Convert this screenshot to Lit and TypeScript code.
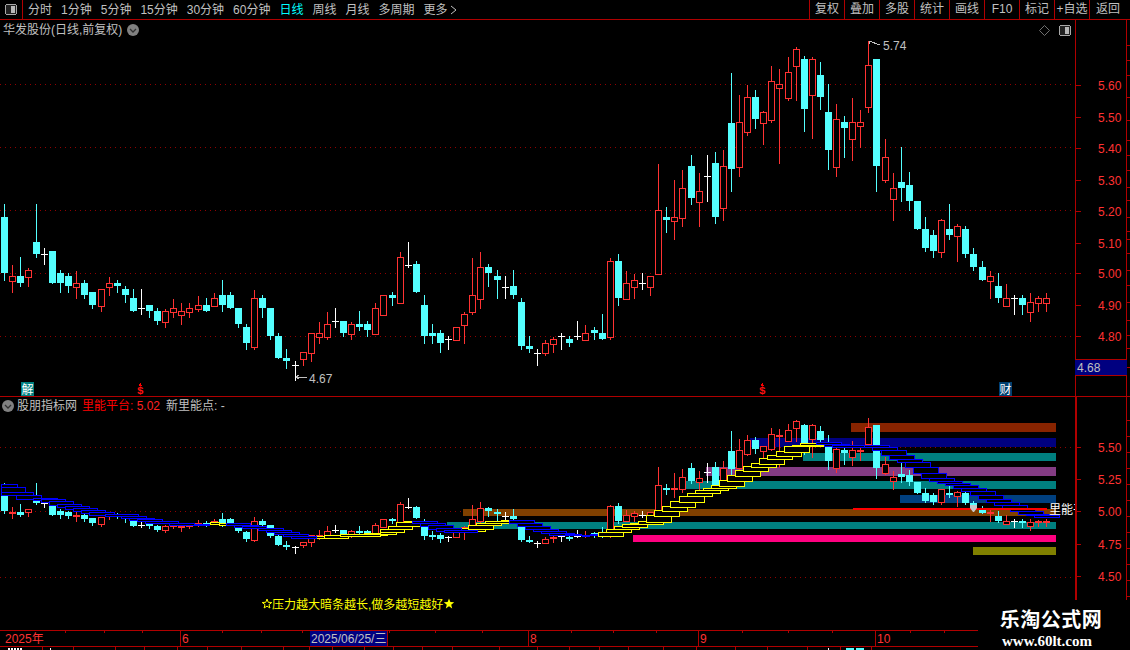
import { LitElement, html, css, svg } from "lit";
import { customElement } from "lit/decorators.js";

type C = { x: number; k: string; h: number; t: number; b: number; l: number };

const grp = (x0: number, y0: number, rows: (number | string)[][]): C[] =>
  rows.map(([z, k, h, t, b, l]) => ({
    x: Math.floor(x0 + (z as number) / 3),
    k: k as string,
    h: y0 + (h as number) / 3,
    t: y0 + (t as number) / 3,
    b: y0 + (b as number) / 3,
    l: y0 + (l as number) / 3,
  }));

const candles: C[] = [
  ...grp(0, 190, [
    [13, "c", 42, 81, 249, 270], [37, "r", 225, 259, 272, 306], [61, "c", 201, 258, 279, 288],
    [85, "r", 234, 240, 261, 288], [109, "c", 42, 156, 192, 201], [133, "w", 174, 192, 192, 222],
    [157, "c", 183, 183, 279, 279], [181, "c", 240, 249, 279, 306], [205, "c", 249, 258, 288, 306],
    [229, "r", 243, 279, 291, 324], [253, "c", 270, 279, 315, 324], [277, "c", 306, 306, 345, 354],
    [304, "r", 297, 297, 348, 363], [328, "r", 261, 279, 291, 315], [352, "c", 270, 279, 288, 306],
    [376, "c", 288, 297, 315, 336], [400, "c", 297, 324, 363, 363], [424, "w", 297, 354, 354, 372],
    [448, "c", 345, 345, 363, 381], [472, "c", 354, 363, 393, 402], [496, "r", 357, 363, 396, 411],
    [520, "r", 327, 354, 366, 381], [544, "r", 339, 363, 375, 402], [568, "r", 339, 354, 366, 381],
    [595, "r", 318, 345, 357, 363], [619, "c", 324, 345, 363, 363], [643, "r", 309, 324, 348, 348],
    [667, "c", 270, 315, 345, 363], [691, "c", 306, 315, 354, 354], [715, "c", 354, 354, 402, 411],
    [739, "c", 402, 411, 459, 477], [763, "r", 300, 324, 471, 477], [787, "c", 315, 324, 354, 381],
    [811, "c", 354, 354, 438, 447], [835, "c", 429, 438, 504, 504], [859, "c", 477, 504, 513, 534],
    [885, "w", 513, 525, 525, 570], [910, "r", 486, 486, 507, 525], [934, "r", 429, 429, 488, 513],
    [958, "r", 396, 429, 441, 459], [982, "r", 366, 402, 441, 447], [1006, "w", 354, 393, 393, 411],
    [1030, "c", 393, 393, 429, 438], [1054, "r", 396, 402, 432, 447], [1078, "c", 363, 402, 411, 420],
    [1102, "c", 393, 402, 420, 438], [1126, "r", 339, 354, 432, 432],
  ]),
  ...grp(380, 160, [
    [10, "r", 405, 405, 465, 465], [37, "c", 396, 405, 414, 435], [61, "r", 276, 291, 429, 429],
    [85, "w", 246, 315, 315, 321], [109, "c", 303, 312, 396, 396], [133, "c", 405, 435, 528, 549],
    [157, "c", 492, 519, 528, 549], [181, "c", 510, 519, 549, 576], [205, "w", 528, 537, 537, 567],
    [229, "r", 501, 501, 540, 540], [253, "r", 456, 462, 495, 549], [277, "r", 294, 405, 456, 462],
    [301, "r", 276, 321, 417, 444], [325, "c", 312, 321, 339, 378], [352, "c", 330, 348, 360, 414],
    [376, "w", 348, 380, 380, 414], [400, "c", 330, 378, 405, 414], [424, "c", 414, 426, 558, 567],
    [448, "c", 528, 558, 567, 576], [472, "w", 567, 579, 579, 615], [496, "r", 540, 549, 579, 585],
    [520, "r", 531, 537, 552, 576], [544, "w", 519, 528, 528, 567], [568, "c", 528, 537, 549, 558],
    [592, "w", 483, 528, 528, 537], [616, "r", 495, 519, 540, 540], [643, "c", 501, 510, 519, 537],
    [667, "c", 462, 519, 537, 537], [691, "r", 294, 303, 531, 537], [715, "c", 282, 303, 414, 435],
    [739, "r", 333, 369, 417, 417], [763, "r", 342, 360, 381, 414], [787, "w", 339, 370, 370, 387],
    [811, "r", 348, 348, 381, 405], [835, "r", 12, 150, 342, 342], [859, "c", 141, 171, 180, 216],
    [883, "r", 60, 171, 183, 237], [907, "r", 30, 84, 174, 198], [935, "c", -15, 18, 114, 132],
    [958, "r", 39, 93, 126, 198], [982, "w", -15, 48, 48, 123], [1006, "c", -24, 9, 171, 189],
    [1030, "r", -30, 18, 144, 180], [1054, "c", -261, -111, 27, 93], [1078, "r", -195, -114, 21, 48],
    [1102, "r", -225, -189, -84, -75],
  ]),
  ...grp(750, 30, [
    [16, "c", 180, 201, 267, 294], [40, "r", 243, 246, 279, 342], [65, "r", 108, 153, 270, 276],
    [88, "r", 117, 162, 174, 399], [115, "r", 81, 126, 204, 210], [139, "r", 51, 57, 108, 210],
    [163, "c", 78, 87, 237, 303], [187, "r", 81, 87, 195, 324], [211, "c", 96, 135, 201, 237],
    [235, "c", 162, 246, 360, 417], [259, "r", 222, 267, 411, 438], [283, "c", 258, 276, 294, 381],
    [307, "r", 204, 276, 327, 390], [331, "r", 240, 276, 288, 351], [355, "r", 33, 105, 231, 246],
    [379, "c", 87, 87, 408, 483], [406, "r", 327, 381, 450, 456], [430, "r", 429, 474, 507, 570],
    [454, "c", 351, 456, 474, 513], [478, "c", 426, 465, 513, 540],
  ]),
  ...grp(750, 220, [
    [502, "c", -57, -57, 27, 27], [526, "c", -9, 27, 84, 93], [550, "c", 30, 45, 93, 111],
    [574, "r", -3, 0, 96, 111], [598, "c", -48, 27, 45, 57], [622, "r", 12, 18, 48, 123],
    [646, "c", 18, 27, 102, 111], [670, "c", 84, 102, 141, 150], [697, "c", 123, 141, 180, 180],
    [721, "r", 153, 168, 183, 234], [745, "c", 159, 198, 234, 246], [769, "r", 192, 234, 258, 258],
    [793, "w", 225, 234, 234, 282], [817, "c", 225, 234, 255, 282], [841, "r", 219, 246, 276, 303],
    [865, "r", 228, 234, 249, 273], [889, "r", 219, 234, 249, 273],
  ]),
];

const toLower = (y: number) => 511 + (y - 274) * 0.4;

const CYAN = "#54ffff";
const RED = "#ff3232";

function drawCandle(c: C, map: (y: number) => number) {
  const h = Math.round(map(c.h));
  const t = Math.round(map(c.t));
  const b = Math.round(map(c.b));
  const l = Math.round(map(c.l));
  const wx = c.x + 0.5;
  const left = c.x - 3;
  const color = c.k === "c" ? CYAN : c.k === "r" ? RED : "#ffffff";
  const wick = svg`<line x1=${wx} x2=${wx} y1=${h} y2=${t} stroke=${color}></line><line x1=${wx} x2=${wx} y1=${b} y2=${l + 1} stroke=${color}></line>`;
  if (c.k === "w" || b - t < 1) {
    return svg`<line x1=${wx} x2=${wx} y1=${h} y2=${l + 1} stroke=${color}></line><rect x=${left} y=${t} width="7" height=${c.k === "w" ? 1 : 2} fill=${color}></rect>`;
  }
  if (c.k === "c" || b - t < 3) {
    return svg`${wick}<rect x=${left} y=${t} width="7" height=${Math.max(b - t, 2)} fill=${color}></rect>`;
  }
  return svg`${wick}<rect x=${left + 0.5} y=${t + 0.5} width="6" height=${b - t} fill="#000" stroke=${color}></rect>`;
}

const bands: [number, number, number, number, string][] = [
  [851, 423, 1056, 432, "#882400"],
  [750, 438, 1056, 447, "#000080"],
  [803, 453, 1056, 461, "#008080"],
  [706, 467, 1056, 476, "#843c84"],
  [682, 481, 1056, 489, "#008080"],
  [900, 495, 1056, 503, "#004080"],
  [463, 509, 1056, 516, "#804000"],
  [447, 522, 1056, 529, "#008080"],
  [633, 535, 1056, 542, "#ff0080"],
  [973, 547, 1056, 555, "#808000"],
];

type R = [number, number, number, number];
const steps = (x0: number, y0: number, rows: R[]): R[] =>
  rows.map(([a, b, c, d]) => [
    Math.round(x0 + a / 3),
    Math.round(y0 + b / 3),
    Math.round(x0 + c / 3),
    Math.round(y0 + d / 3),
  ]);

const blue: R[] = [
  ...steps(0, 470, [
    [3, 42, 51, 51], [3, 51, 75, 66], [3, 66, 99, 75], [48, 75, 123, 87], [99, 84, 171, 90], [123, 87, 195, 96],
    [147, 93, 219, 105], [171, 102, 243, 111], [195, 108, 267, 117], [219, 114, 291, 123], [243, 120, 315, 129],
    [267, 126, 342, 135], [315, 132, 414, 138], [363, 138, 438, 144], [387, 144, 462, 150], [411, 147, 486, 153],
    [435, 153, 534, 159], [507, 159, 582, 165], [582, 162, 630, 165], [678, 159, 750, 165], [702, 165, 774, 171],
    [726, 168, 798, 174], [774, 174, 849, 180], [798, 180, 873, 186], [822, 186, 897, 192], [849, 192, 924, 198],
    [873, 198, 948, 204],
  ]),
  ...steps(380, 460, [
    [96, 183, 171, 190], [120, 190, 195, 197], [144, 196, 219, 207], [168, 205, 243, 212], [192, 211, 290, 215],
    [387, 180, 462, 189], [411, 189, 486, 198], [435, 198, 510, 207], [459, 207, 534, 213], [483, 213, 558, 219],
    [507, 219, 582, 224], [555, 222, 606, 226], [606, 224, 630, 227], [630, 222, 654, 226],
  ]),
  ...steps(750, 410, [
    [198, 96, 273, 102], [222, 102, 297, 108], [246, 105, 345, 111], [342, 105, 417, 112], [366, 111, 441, 120],
    [393, 120, 468, 135], [417, 135, 492, 147], [441, 147, 516, 156], [465, 156, 540, 171], [489, 171, 564, 189],
    [513, 189, 588, 204], [537, 204, 612, 214], [561, 213, 636, 220], [585, 219, 660, 225], [609, 225, 684, 234],
    [633, 234, 708, 243], [660, 243, 735, 255], [684, 255, 759, 267], [708, 267, 783, 276], [732, 276, 807, 285],
    [756, 285, 831, 297], [780, 297, 855, 303], [804, 303, 879, 312], [828, 312, 903, 316], [852, 315, 927, 321],
  ]),
];

const yellow: R[] = [
  ...steps(0, 470, [
    [630, 156, 657, 162], [657, 159, 678, 165], [948, 198, 1020, 205], [972, 195, 1044, 204], [1020, 192, 1140, 197],
    [1092, 189, 1140, 193],
  ]),
  ...steps(380, 460, [
    [0, 208, 72, 215], [0, 215, 48, 221], [0, 221, 24, 224], [24, 198, 96, 208], [48, 186, 123, 198], [72, 183, 96, 187],
    [243, 204, 315, 214], [264, 196, 339, 206], [288, 189, 363, 196], [315, 183, 387, 189], [363, 181, 387, 183],
    [654, 216, 729, 227], [678, 207, 753, 217], [702, 198, 777, 207], [726, 192, 801, 200], [750, 189, 825, 192],
    [774, 183, 849, 192], [798, 165, 873, 185], [822, 150, 897, 167], [846, 138, 921, 152], [870, 123, 945, 140],
    [897, 108, 972, 125], [921, 99, 996, 108], [945, 90, 1020, 100], [969, 84, 1044, 91], [993, 75, 1068, 85],
    [1017, 60, 1092, 77], [1041, 45, 1116, 62], [1065, 30, 1140, 47], [1089, 18, 1164, 32], [1113, 9, 1188, 20],
  ]),
  ...steps(750, 410, [
    [3, 159, 78, 171], [27, 144, 102, 162], [51, 135, 126, 147], [78, 123, 153, 137], [102, 108, 177, 125],
    [126, 105, 222, 108], [150, 98, 198, 105], [318, 105, 342, 108],
  ]),
];

const stepRect = (r: R, col: string) => {
  const w = r[2] - r[0];
  const h = r[3] - r[1];
  return h < 2
    ? svg`<rect x=${r[0]} y=${r[1]} width=${w} height="2" fill=${col}></rect>`
    : svg`<rect x=${r[0] + 0.5} y=${r[1] + 0.5} width=${w} height=${h} fill="#000" stroke=${col}></rect>`;
};

const star = (cx: number, cy: number, r: number) => {
  const pts: string[] = [];
  for (let i = 0; i < 10; i++) {
    const a = (-90 + i * 36) * (Math.PI / 180);
    const rr = i % 2 ? r * 0.42 : r;
    pts.push(`${(cx + Math.cos(a) * rr).toFixed(1)},${(cy + Math.sin(a) * rr).toFixed(1)}`);
  }
  return pts.join(" ");
};

const mainTicks: [number, string][] = [
  [85, "5.60"], [117, "5.50"], [148, "5.40"], [180, "5.30"], [211, "5.20"],
  [243, "5.10"], [273, "5.00"], [305, "4.90"], [336, "4.80"],
];
const lowTicks: [number, string][] = [
  [447, "5.50"], [479, "5.25"], [511, "5.00"], [544, "4.75"], [576, "4.50"],
];
const railMain = [45, 60, 75, 97, 120, 140, 155, 170, 187, 200, 217, 231, 239, 253, 270, 285, 302, 320, 335, 348, 367];
const railLow = [420, 436, 452, 468, 484, 500, 516, 532, 548, 564, 580, 596];
const dateTicks = [65, 104, 142, 222, 261, 302, 389, 435, 482, 571, 613, 656, 742, 788, 832, 910, 944];
const dateSeps = [180, 528, 698, 875];
const bottomLines = [42, 73, 115, 144, 177, 207, 241, 283, 309, 332, 364, 393, 422, 452, 499, 537, 569, 599, 628, 663, 696, 735, 767, 807, 840, 871];
const bottomBits: [number, number, string][] = [
  [8, 2, "#ffffff"], [11, 2, "#ffffff"], [14, 2, "#ffffff"], [17, 2, "#ffffff"], [20, 2, "#ffffff"],
  [50, 1, "#ffffff"], [828, 1, "#ffffff"], [846, 8, "#54ffff"], [856, 8, "#54ffff"],
];

@customElement("app-root")
export class AppRoot extends LitElement {
  static styles = css`
    :host {
      display: block;
      position: relative;
      width: 1130px;
      height: 650px;
      overflow: hidden;
      background: #000;
      color: #c0c0c0;
      font: 12px/14px "Liberation Sans", "Noto Sans CJK SC", sans-serif;
    }
    svg { display: block; shape-rendering: crispEdges; }
    svg text { font: 12px "Liberation Sans", "Noto Sans CJK SC", sans-serif; shape-rendering: auto; }
    .smooth { shape-rendering: auto; }
    .toolbar {
      display: flex;
      height: 19px;
      border-bottom: 1px solid #b00000;
      box-sizing: content-box;
      align-items: center;
    }
    .menu-btn {
      width: 22px;
      height: 19px;
      border-right: 1px solid #b00000;
      display: flex;
      align-items: center;
      justify-content: center;
    }
    .tabs { display: flex; gap: 9px; margin-left: 5px; align-items: center; flex: 1; }
    .tab { white-space: nowrap; }
    .tab.on { color: #00ffff; }
    .more { display: flex; align-items: center; gap: 2px; }
    .cells { display: flex; height: 19px; margin-right: 4px; }
    .cell {
      width: 34px;
      border-left: 1px solid #b00000;
      text-align: center;
      line-height: 19px;
      white-space: nowrap;
    }
    .cell.tail { width: 36px; }
    .pane { display: grid; grid-template-columns: 1075px 55px; border-bottom: 1px solid #b00000; }
    .main { height: 376px; }
    .lower { height: 233px; }
    .col { display: flex; flex-direction: column; min-width: 0; }
    .head { display: flex; align-items: center; height: 20px; padding-left: 3px; white-space: nowrap; }
    .head.low { height: 17px; padding-left: 2px; }
    .head .name { margin-right: 5px; }
    .head .gap { margin-left: 6px; }
    .head .alert { color: #ff0000; }
    .head .alert b { font-weight: normal; color: #ff2020; }
    .head.low .round { margin: 0 3px 0 0; }
    .pin { margin-left: auto; margin-right: 4px; display: flex; gap: 9px; align-items: center; }
    .datebar { height: 16px; border-bottom: 1px solid #b00000; box-sizing: border-box; }
    .axis-label { fill: #ff3232; }
    .gray { fill: #c0c0c0; }
    .hot { fill: #ffffff; }
    .note { fill: #ffff00; }
    .date-red { fill: #ff3232; }
    svg text.dollar { font: bold 11px "Liberation Mono", monospace; fill: #ff1010; }
    .watermark {
      position: absolute;
      left: 978px;
      top: 600px;
      width: 152px;
      height: 50px;
      background: #000;
      color: #fff;
      text-align: center;
      box-sizing: border-box;
      padding-top: 8px;
    }
    .wm-cn { font: bold 20px/22px "Noto Sans CJK SC", sans-serif; letter-spacing: .5px; margin-left: -52px; width: 250px; }
    .wm-en { font: bold 15px/16px "Liberation Serif", serif; margin-top: 3px; margin-left: -14px; }
  `;

  private icon() {
    return html`<svg width="12" height="11" viewBox="0 0 12 11"><rect x=".5" y=".5" width="11" height="10" rx="2" fill="#222" stroke="#a8a8a8"></rect><rect x="6" y="2" width="4" height="7" fill="#b8b8b8"></rect></svg>`;
  }
  private round() {
    return html`<svg class="round smooth" width="12" height="12" viewBox="0 0 12 12"><circle cx="6" cy="6" r="6" fill="#808080"></circle><path d="M3 5l3 3 3-3" fill="none" stroke="#303030" stroke-width="1.3"></path></svg>`;
  }

  private mainChart() {
    return html`<svg width="1075" height="356" viewBox="0 40 1075 356">
      ${[85, 148, 211, 274, 337].map(
        (y) => svg`<line x1="0" x2="1075" y1=${y - 0.5} y2=${y - 0.5} stroke="#900000" stroke-dasharray="1 4"></line>`,
      )}
      ${candles.map((c) => drawCandle(c, (y) => y))}
      <path d="M296 377h11M296 377l3-2M296 377l3 2" stroke="#c0c0c0" fill="none"></path>
      <text x="309" y="383" class="gray">4.67</text>
      <path d="M869 41l11 4M869 41v3M869 41h3" stroke="#c0c0c0" fill="none"></path>
      <text x="883" y="50" class="gray">5.74</text>
      <rect x="21" y="382" width="13" height="14" fill="#008080"></rect>
      <text x="21.5" y="394" class="hot">解</text>
      <rect x="999" y="382" width="13" height="14" fill="#004070"></rect>
      <text x="999.5" y="394" class="hot">财</text>
      ${[137, 759].map(
        (x) => svg`<path d="M${x + 3.5} 383l2 3h-4z" fill="#ff0000"></path>
          <text x=${x} y="394" class="dollar">$</text>`,
      )}
    </svg>`;
  }

  private lowerChart() {
    return html`<svg width="1075" height="216" viewBox="0 414 1075 216">
      ${[447, 511, 577].map(
        (y) => svg`<line x1="0" x2="1075" y1=${y + 0.5} y2=${y + 0.5} stroke="#900000" stroke-dasharray="1 4"></line>`,
      )}
      ${bands.map(
        ([a, b, c, d, f]) => svg`<rect x=${a} y=${b} width=${c - a} height=${d - b} fill=${f}></rect>`,
      )}
      ${candles.map((c) => drawCandle(c, toLower))}
      ${yellow.map((r) => stepRect(r, "#ffff00"))}
      ${blue.map((r) => stepRect(r, "#0000ff"))}
      <rect x="853" y="508" width="194" height="2" fill="#ff0000"></rect>
      <path class="smooth" d="M970 505h7v3l-3 4h-1l-3-4z" fill="#c8c8c8"></path>
      <text x="1049" y="514" class="hot">里能平台</text>
      <polygon class="smooth" points=${star(267, 604, 5)} fill="none" stroke="#ffff00"></polygon>
      <text x="272" y="609" class="note">压力越大暗条越长,做多越短越好</text>
      <polygon class="smooth" points=${star(449, 604, 5.5)} fill="#ffff00"></polygon>
    </svg>`;
  }

  private axis(vb: string, h: number, ticks: [number, string][], rail: number[], heavy: boolean, extra: unknown) {
    return html`<svg width="55" height=${h} viewBox=${vb}>
      <rect x="0" y="0" width=${heavy ? 2 : 1} height="1000" fill="#b00000"></rect>
      <rect x="51" y="0" width="1" height="1000" fill="#b00000"></rect>
      ${ticks.map(
        ([y, s]) => svg`<rect x="0" y=${y} width="6" height="1" fill="#b00000"></rect>
          <text x="23" y=${y + 5} class="axis-label">${s}</text>`,
      )}
      ${rail.map((y) => svg`<rect x="52" y=${y} width="3" height="1" fill="#b00000"></rect>`)}
      ${extra}
    </svg>`;
  }

  render() {
    const tabs = ["分时", "1分钟", "5分钟", "15分钟", "30分钟", "60分钟", "日线", "周线", "月线", "多周期"];
    const cells = ["复权", "叠加", "多股", "统计", "画线", "F10", "标记", "+自选", "返回"];
    return html`
      <div class="toolbar">
        <div class="menu-btn">${this.icon()}</div>
        <div class="tabs">
          ${tabs.map((t) => html`<span class="tab ${t === "日线" ? "on" : ""}">${t}</span>`)}
          <span class="more">更多<svg class="smooth" width="7" height="10" viewBox="0 0 7 10"><path d="M1 1l5 4-5 4" fill="none" stroke="#c0c0c0"></path></svg></span>
        </div>
        <div class="cells">
          ${cells.map((c, i) => html`<div class="cell ${i === cells.length - 1 ? "tail" : ""}">${c}</div>`)}
        </div>
      </div>

      <div class="pane main">
        <div class="col">
          <div class="head">
            <span class="name">华发股份(日线,前复权)</span>${this.round()}
            <span class="pin">
              <svg class="smooth" width="11" height="11" viewBox="0 0 11 11"><path d="M5.5 .5l5 5-5 5-5-5z" fill="none" stroke="#707070"></path></svg>
              ${this.icon()}
            </span>
          </div>
          ${this.mainChart()}
        </div>
        ${this.axis(
          "0 20 55 376",
          376,
          mainTicks,
          railMain,
          false,
          svg`<rect x="0" y="359" width="52" height="16" fill="#000080"></rect>
            <rect x="0" y="359" width="52" height="1" fill="#b00000"></rect>
            <rect x="0" y="375" width="52" height="1" fill="#b00000"></rect>
            <text x="2" y="372" class="gray">4.68</text>`,
        )}
      </div>

      <div class="pane lower">
        <div class="col">
          <div class="head low">
            ${this.round()}
            <span class="name">股朋指标网</span>
            <span class="alert">里能平台: <b>5.02</b></span>
            <span class="gap">新里能点: -</span>
          </div>
          ${this.lowerChart()}
        </div>
        ${this.axis("0 397 55 233", 233, lowTicks, railLow, true, "")}
      </div>

      <div class="datebar">
        <svg width="1130" height="15" viewBox="0 631 1130 15">
          ${dateTicks.map((x) => svg`<rect x=${x} y="631" width="1" height="2" fill="#b00000"></rect>`)}
          ${dateSeps.map((x) => svg`<rect x=${x} y="631" width="1" height="15" fill="#b00000"></rect>`)}
          <text x="5" y="643" class="date-red">2025年</text>
          <rect x="310" y="631" width="78" height="15" fill="#000080"></rect>
          <rect x="387" y="631" width="1" height="15" fill="#b00000"></rect>
          <text x="311" y="643" class="gray">2025/06/25/三</text>
          <text x="182" y="643" class="date-red">6</text>
          <text x="530" y="643" class="date-red">8</text>
          <text x="700" y="643" class="date-red">9</text>
          <text x="877" y="643" class="date-red">10</text>
        </svg>
      </div>
      <svg width="1130" height="3" viewBox="0 647 1130 3">
        ${bottomLines.map((x) => svg`<rect x=${x} y="647" width="1" height="3" fill="#b00000"></rect>`)}
        ${bottomBits.map(([x, w, f]) => svg`<rect x=${x} y="648" width=${w} height="2" fill=${f}></rect>`)}
      </svg>

      <div class="watermark">
        <div class="wm-cn">乐淘公式网</div>
        <div class="wm-en">www.60lt.com</div>
      </div>
    `;
  }
}
